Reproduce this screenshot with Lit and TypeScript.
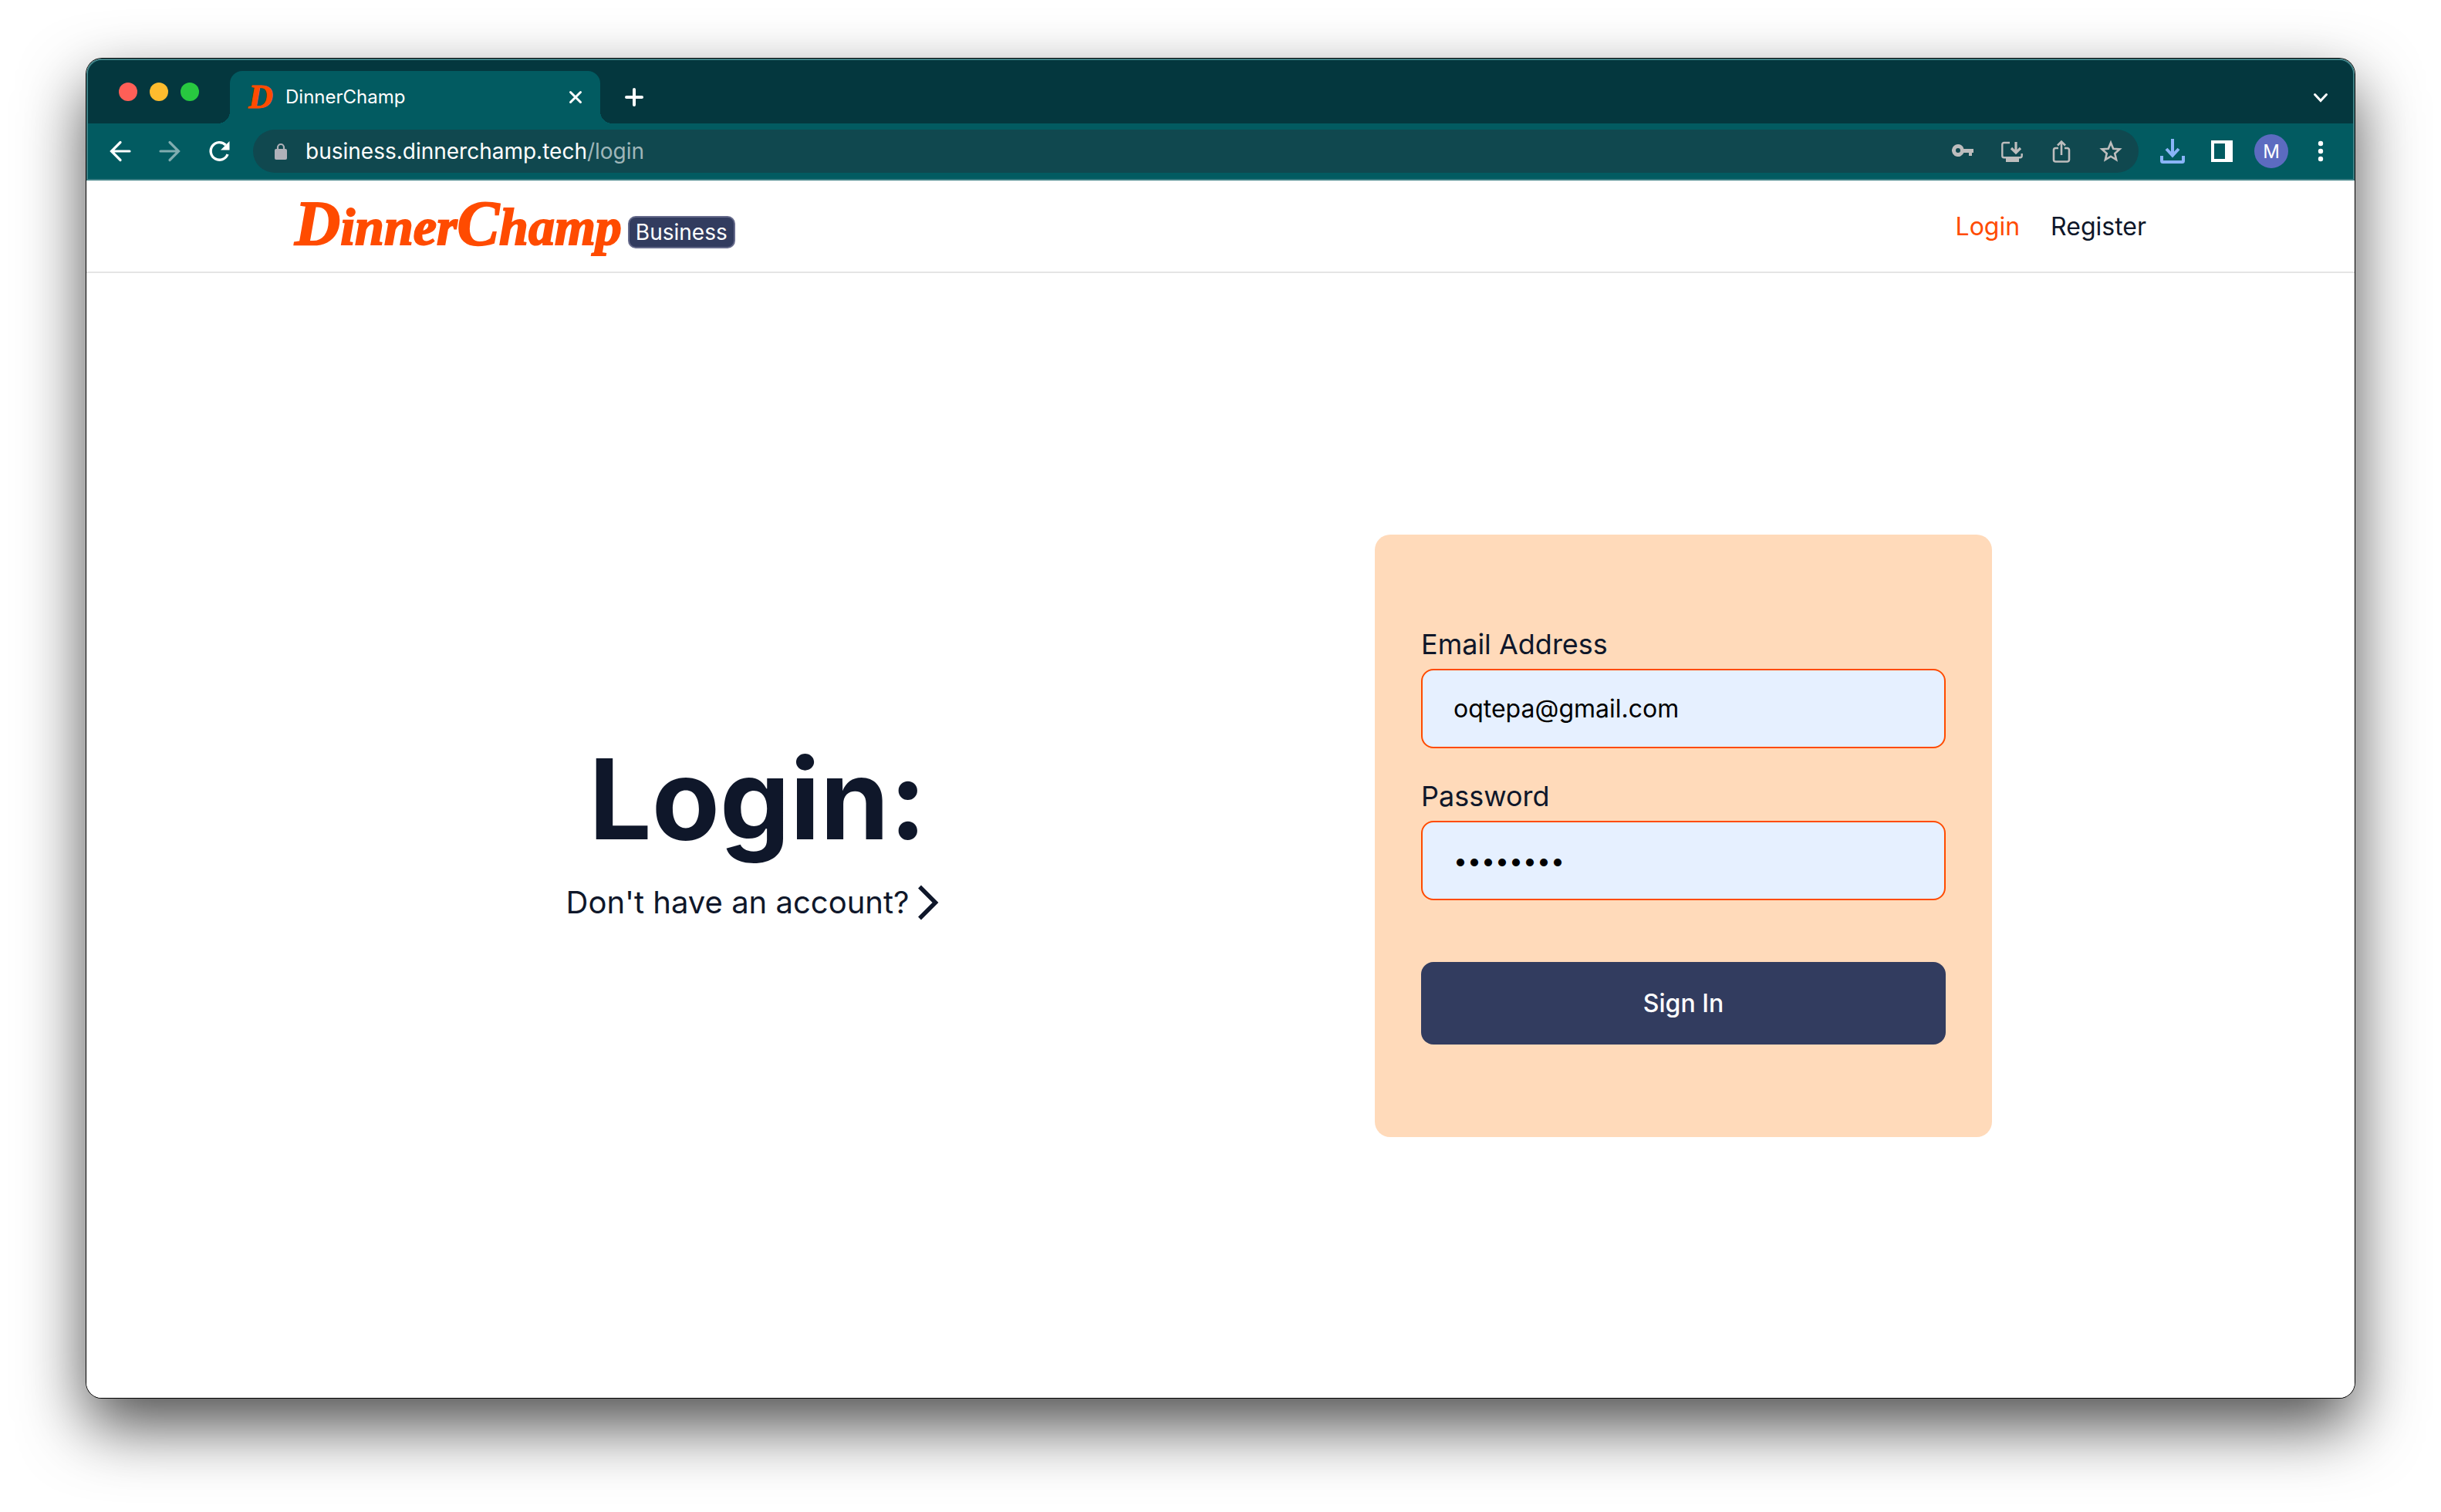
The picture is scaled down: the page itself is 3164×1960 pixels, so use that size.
import { LitElement, html, css, svg } from "lit";
import { customElement } from "lit/decorators.js";

const icon = (size: number, body: unknown, cls = "") =>
  html`<svg class="icon ${cls}" width=${size} height=${size} viewBox="0 0 ${size} ${size}" aria-hidden="true">${body}</svg>`;

@customElement("browser-bar")
export class BrowserBar extends LitElement {
  static styles = css`
    :host {
      display: block;
      color: #fff;
      font-family: Inter, "Liberation Sans", sans-serif;
      border: 2px solid #3f8085;
      border-radius: 20px 20px 0 0;
      background: #025b61;
      overflow: hidden;
    }
    button {
      display: flex;
      align-items: center;
      justify-content: center;
      width: 32px;
      height: 32px;
      padding: 0;
      border: 0;
      background: none;
      color: inherit;
      font: inherit;
    }
    .icon {
      display: block;
      flex: none;
    }
    .strip {
      display: flex;
      align-items: flex-end;
      height: 82px;
      background: #04373e;
    }
    .lights {
      display: flex;
      gap: 16px;
      padding: 0 40px;
      align-self: center;
    }
    .light {
      width: 24px;
      height: 24px;
      border-radius: 50%;
    }
    .close {
      background: #ff5f57;
    }
    .min {
      background: #febc2e;
    }
    .max {
      background: #28c840;
    }
    .tab {
      position: relative;
      display: flex;
      align-items: center;
      gap: 16px;
      width: 480px;
      height: 68px;
      margin-right: 28px;
      padding: 0 16px 0 24px;
      box-sizing: border-box;
      border-radius: 16px 16px 0 0;
      background: #025b61;
    }
    .tab::before,
    .tab::after {
      content: "";
      position: absolute;
      bottom: 0;
      width: 16px;
      height: 16px;
    }
    .tab::before {
      right: 100%;
      background: radial-gradient(circle at 0 0, #04373e 16px, #025b61 16px);
    }
    .tab::after {
      left: 100%;
      background: radial-gradient(circle at 100% 0, #04373e 16px, #025b61 16px);
    }
    .favicon {
      width: 32px;
      font: italic 700 44px/32px "Liberation Serif", serif;
      color: #ff4b00;
      text-align: center;
      -webkit-text-stroke: 1px #ff4b00;
    }
    .title {
      flex: 1;
      font-size: 24px;
      line-height: 32px;
    }
    .new-tab,
    .tabs-menu {
      height: 68px;
    }
    .tabs-menu {
      margin-left: auto;
      margin-right: 26px;
    }
    .tools {
      display: flex;
      align-items: center;
      gap: 32px;
      height: 72px;
      padding: 0 26px;
    }
    .dim {
      opacity: 0.5;
    }
    .omnibox {
      flex: 1;
      display: flex;
      align-items: center;
      height: 56px;
      margin-left: -4px;
      margin-right: -4px;
      padding: 0 20px;
      border-radius: 28px;
      background: #10484f;
    }
    .url {
      flex: 1;
      margin-left: 16px;
      font-size: 28px;
      line-height: 36px;
    }
    .path {
      color: #9fb6b9;
    }
    .actions {
      display: flex;
      gap: 32px;
      color: #bdbdbd;
    }
    .lock {
      color: #afb1b9;
    }
    .download {
      color: #8ab4f8;
    }
    .avatar {
      width: 44px;
      height: 44px;
      margin: 0 -6px;
      border-radius: 50%;
      background: #5c6bc0;
      font-size: 24px;
    }
  `;

  render() {
    return html`
      <div class="strip">
        <div class="lights">
          <span class="light close"></span><span class="light min"></span><span class="light max"></span>
        </div>
        <div class="tab">
          <span class="favicon">D</span>
          <span class="title">DinnerChamp</span>
          <button aria-label="Close tab">
            ${icon(32, svg`<path d="M9.500 9.500 22.500 22.500M22.500 9.500 9.500 22.500" stroke="currentColor" stroke-width="3" stroke-linecap="round"/>`)}
          </button>
        </div>
        <button class="new-tab" aria-label="New tab">
          ${icon(32, svg`<path d="M16 6V26M6 16H26" stroke="currentColor" stroke-width="4" stroke-linecap="round"/>`)}
        </button>
        <button class="tabs-menu" aria-label="Search tabs">
          ${icon(32, svg`<path d="m8.500 12.500 7.500 8 7.500-8" fill="none" stroke="currentColor" stroke-width="3" stroke-linecap="round"/>`)}
        </button>
      </div>
      <div class="tools">
        <button aria-label="Back">
          ${icon(32, svg`<path d="M28 16H5M16 4.500 4.500 16 16 27.500" fill="none" stroke="currentColor" stroke-width="3.200" stroke-linecap="round"/>`)}
        </button>
        <button class="dim" aria-label="Forward">
          ${icon(32, svg`<path d="M4 16H27M16 4.500 27.500 16 16 27.500" fill="none" stroke="currentColor" stroke-width="3.200" stroke-linecap="round"/>`)}
        </button>
        <button aria-label="Reload">
          ${icon(32, svg`<path d="M27 20A11.300 11.300 0 1 1 24.500 8" fill="none" stroke="currentColor" stroke-width="3.400"/><path d="M29.500 3v11.500H18z" fill="currentColor"/>`)}
        </button>
        <div class="omnibox">
          ${icon(32, svg`<rect x="8" y="13" width="16" height="14" rx="2" fill="currentColor"/><path d="M12 14v-3a4 4 0 0 1 8 0v3" fill="none" stroke="currentColor" stroke-width="2.200"/>`, "lock")}
          <span class="url">business.dinnerchamp.tech<span class="path">/login</span></span>
          <div class="actions">
            <button aria-label="Passwords">
              ${icon(32, svg`<path fill-rule="evenodd" d="M10 7a8 8 0 1 0 7.400 11H24v4h4v-4h2v-5H17.400A8 8 0 0 0 10 7zm0 5a3 3 0 1 1 0 6 3 3 0 0 1 0-6z" fill="currentColor"/>`)}
            </button>
            <button aria-label="Install app">
              ${icon(32, svg`<path d="M13 5H5.500A2.200 2.200 0 0 0 3.300 7.200V22A2.200 2.200 0 0 0 5.500 24.200H26.500A2.200 2.200 0 0 0 28.700 22V19" fill="none" stroke="currentColor" stroke-width="2.400"/><path d="M21 4V17M15 12 21 18 27 12" fill="none" stroke="currentColor" stroke-width="3.200"/><path d="M8 24H25V30H8z" fill="currentColor"/>`)}
            </button>
            <button aria-label="Share">
              ${icon(32, svg`<path d="M12 12H8.500A2.500 2.500 0 0 0 6 14.500V27A2.500 2.500 0 0 0 8.500 29.500H23.500A2.500 2.500 0 0 0 26 27V14.500A2.500 2.500 0 0 0 23.500 12H20M16 21V4M11 8.500 16 3.500 21 8.500" fill="none" stroke="currentColor" stroke-width="2.600"/>`)}
            </button>
            <button aria-label="Bookmark this tab">
              ${icon(32, svg`<path d="m16 5 3.200 7.700 8.300.7-6.300 5.500 1.900 8.100-7.100-4.300-7.100 4.300 1.900-8.100-6.300-5.500 8.300-.7z" fill="none" stroke="currentColor" stroke-width="2.600"/>`)}
            </button>
          </div>
        </div>
        <button class="download" aria-label="Downloads">
          ${icon(32, svg`<path d="M16 0V21M8 13 16 21.500 24 13" fill="none" stroke="currentColor" stroke-width="4"/><path d="M2 22V28.500A1.500 1.500 0 0 0 3.500 30H28.500A1.500 1.500 0 0 0 30 28.500V22" fill="none" stroke="currentColor" stroke-width="4"/>`)}
        </button>
        <button aria-label="Side panel">
          ${icon(32, svg`<path fill-rule="evenodd" d="M2 2H30V30H2zM6 6V26H20V6z" fill="currentColor"/>`)}
        </button>
        <button class="avatar" aria-label="Profile M">M</button>
        <button aria-label="Menu">
          ${icon(32, svg`<circle cx="16" cy="6" r="3.200" fill="currentColor"/><circle cx="16" cy="16" r="3.200" fill="currentColor"/><circle cx="16" cy="26" r="3.200" fill="currentColor"/>`)}
        </button>
      </div>
    `;
  }
}

@customElement("login-page")
export class LoginPage extends LitElement {
  static styles = css`
    :host {
      display: flex;
      flex-direction: column;
      color: #0f172a;
      font-family: Inter, "Liberation Sans", sans-serif;
      font-size: 32px;
      background: #fff;
      border-radius: 0 0 20px 20px;
    }
    a {
      color: inherit;
      text-decoration: none;
    }
    .header {
      border-bottom: 2px solid #e5e5e5;
    }
    .inner {
      display: flex;
      align-items: center;
      justify-content: space-between;
      box-sizing: border-box;
      height: 118px;
      padding-top: 2px;
    }
    .inner,
    .main {
      width: 100%;
      max-width: 2400px;
      margin: 0 auto;
    }
    .brand {
      display: flex;
      align-items: flex-end;
      gap: 8px;
    }
    .logo {
      height: 72px;
      padding-bottom: 8px;
      color: #ff4b00;
      font: italic 700 68px/72px "Liberation Serif", serif;
      -webkit-text-stroke: 2px #ff4b00;
    }
    .cap {
      font-size: 82px;
    }
    .badge {
      margin-bottom: 12px;
      padding: 0 8px;
      border: 2px solid #64698a;
      border-radius: 10px;
      background: #323c5f;
      color: #fff;
      font-size: 28px;
      line-height: 38px;
    }
    .nav {
      display: flex;
      gap: 40px;
      line-height: 48px;
    }
    .current {
      color: #ff4b00;
    }
    .main {
      flex: 1;
      display: grid;
      grid-template-columns: 1fr 1fr;
      place-items: center;
    }
    .intro {
      display: flex;
      flex-direction: column;
      align-items: center;
      gap: 30px;
    }
    h1 {
      margin: 0;
      font-size: 144px;
      line-height: 144px;
      font-weight: 700;
    }
    .switch {
      display: flex;
      align-items: center;
      font-size: 40px;
      line-height: 64px;
    }
    .card {
      display: flex;
      flex-direction: column;
      width: 800px;
      box-sizing: border-box;
      padding: 120px 60px;
      border-radius: 20px;
      background: #ffdaba;
    }
    label {
      margin-bottom: 10px;
      font-size: 36px;
      line-height: 44px;
    }
    input {
      height: 103px;
      box-sizing: border-box;
      margin: 0 0 40px;
      padding: 0 40px;
      border: 2px solid #ff4b00;
      border-radius: 16px;
      background: #e6f0ff;
      color: #000;
      font: inherit;
      outline: none;
    }
    .submit {
      height: 107px;
      margin-top: 40px;
      border: 0;
      border-radius: 16px;
      background: #323c5f;
      color: #fff;
      font: inherit;
      font-weight: 500;
    }
  `;

  render() {
    return html`
      <header class="header">
        <div class="inner">
          <a class="brand" href="#home"
            ><span class="logo"><span class="cap">D</span>inner<span class="cap">C</span>hamp</span
            ><span class="badge">Business</span></a
          >
          <nav class="nav"><a class="current" href="#login">Login</a><a href="#register">Register</a></nav>
        </div>
      </header>
      <main class="main">
        <section class="intro">
          <h1>Login:</h1>
          <a class="switch" href="#register">
            Don't have an account?
            <svg width="52" height="52" viewBox="0 0 52 52" aria-hidden="true">
              <path d="M14 5.500 34.500 26 14 46.500" fill="none" stroke="currentColor" stroke-width="5.500"/>
            </svg>
          </a>
        </section>
        <form class="card" @submit=${(e: Event) => e.preventDefault()}>
          <label for="email">Email Address</label>
          <input id="email" type="email" .value=${"oqtepa@gmail.com"} />
          <label for="password">Password</label>
          <input id="password" type="password" .value=${"password"} />
          <button class="submit">Sign In</button>
        </form>
      </main>
    `;
  }
}

@customElement("app-root")
export class AppRoot extends LitElement {
  static styles = css`
    :host {
      display: flex;
      box-sizing: border-box;
      min-height: 100vh;
      padding: 76px 112px 148px;
      background: #fff;
    }
    .window {
      flex: 1;
      display: flex;
      flex-direction: column;
      border-radius: 20px;
      box-shadow:
        0 0 0 1px #000,
        0 36px 84px rgba(0, 0, 0, 0.7);
    }
    .page {
      flex: 1;
    }
  `;

  render() {
    return html`<div class="window"><browser-bar></browser-bar><login-page class="page"></login-page></div>`;
  }
}
